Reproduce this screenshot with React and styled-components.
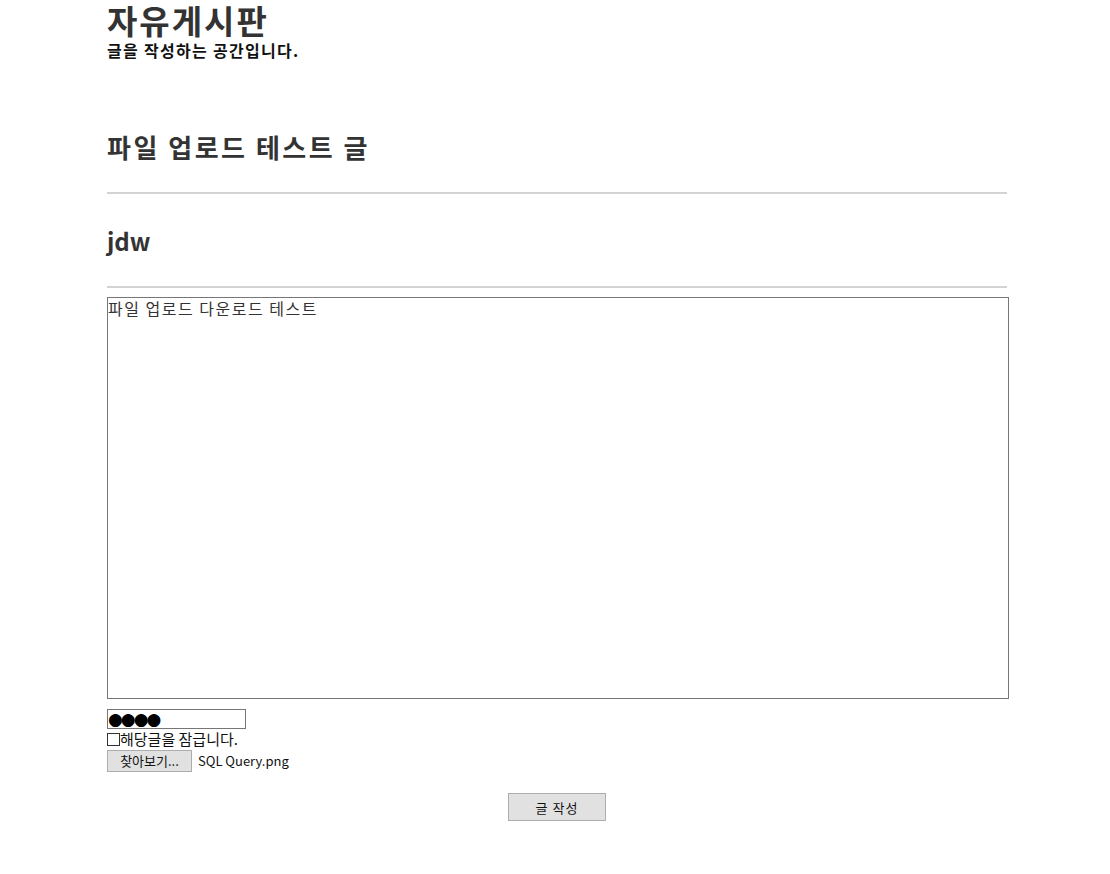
import React from "react";
import styled, { createGlobalStyle } from "styled-components";

const GlobalStyle = createGlobalStyle`
    body {
        margin: 0;
        background: #fff;
        font-family: "Noto Sans CJK KR", "Noto Sans", sans-serif;
        color: #333;
    }
`;

const Page = styled.div`
    width: 902px;
    margin: 0 0 0 107px;
`;

const Header = styled.header`
    display: flex;
    flex-direction: column;
    margin-bottom: 56px;
`;

const BoardName = styled.h1`
    margin: 0;
    font-size: 33px;
    font-weight: 700;
    line-height: 40px;
    letter-spacing: 2px;
    color: #333;
`;

const BoardDesc = styled.p`
    margin: 0;
    font-size: 16px;
    font-weight: 700;
    line-height: 20px;
    letter-spacing: 1.3px;
    color: #111;
`;

// 제목은 한글이라 폭이 넓게, 작성자는 영문이라 기본 크기로
const Field = styled.h2`
    margin: 0;
    padding: 15px 0;
    font-size: ${(p) => (p.$hangul ? 26 : 24)}px;
    font-weight: 700;
    line-height: 32px;
    letter-spacing: ${(p) => (p.$hangul ? 2.5 : 0)}px;
    color: #333;
`;

const Divider = styled.hr`
    width: 900px;
    margin: 14px 0 ${(p) => p.$after}px;
    border: 0;
    border-top: 2px solid #d3d3d3;
`;

const Content = styled.textarea`
    display: block;
    box-sizing: border-box;
    width: 902px;
    height: 402px;
    margin: 0;
    padding: 0;
    border: 1px solid #767676;
    font-family: inherit;
    font-size: 16px;
    line-height: 20px;
    letter-spacing: 1.5px;
    color: #333;
    resize: none;
`;

const Options = styled.div`
    display: flex;
    flex-direction: column;
    align-items: flex-start;
    margin-top: 10px;
    font-size: 15px;
    color: #111;
`;

const Password = styled.input`
    box-sizing: border-box;
    width: 139px;
    height: 20px;
    margin: 0;
    padding: 0;
    border: 1px solid #767676;
    font-family: "DejaVu Sans", sans-serif;
    font-size: 17px;
    line-height: 18px;
    letter-spacing: -2px;
    color: #000;
`;

const LockLabel = styled.label`
    display: flex;
    align-items: center;
    height: 20px;
    line-height: 20px;
`;

const Check = styled.span`
    box-sizing: border-box;
    width: 13px;
    height: 13px;
    border: 1px solid #333;
    background: #fff;
`;

const FileRow = styled.div`
    display: flex;
    align-items: center;
    gap: 6px;
    height: 23px;
    font-size: 13px;
`;

const FileButton = styled.span`
    box-sizing: border-box;
    display: flex;
    align-items: center;
    justify-content: center;
    width: 85px;
    height: 22px;
    background: #e1e1e1;
    border: 1px solid #adadad;
    font-size: 13px;
    color: #111;
`;

const Actions = styled.div`
    display: flex;
    justify-content: center;
    margin-top: 21px;
    padding-right: 2px;
`;

const Submit = styled.button`
    box-sizing: border-box;
    width: 98px;
    height: 28px;
    background: #e1e1e1;
    border: 1px solid #adadad;
    font-family: inherit;
    font-size: 13px;
    letter-spacing: 1px;
    color: #111;
    padding: 0;
`;

const App = () => {
    return (
        <>
            <GlobalStyle />
            <Page>
                <Header>
                    <BoardName>자유게시판</BoardName>
                    <BoardDesc>글을 작성하는 공간입니다.</BoardDesc>
                </Header>
                <Field $hangul>파일 업로드 테스트 글</Field>
                <Divider $after={16} />
                <Field>jdw</Field>
                <Divider $after={9} />
                <Content defaultValue="파일 업로드 다운로드 테스트" />
                <Options>
                    <Password type="text" defaultValue="●●●●" readOnly />
                    <LockLabel>
                        <Check />
                        해당글을 잠급니다.
                    </LockLabel>
                    <FileRow>
                        <FileButton>찾아보기...</FileButton>
                        SQL Query.png
                    </FileRow>
                </Options>
                <Actions>
                    <Submit>글 작성</Submit>
                </Actions>
            </Page>
        </>
    );
};

export default App;
